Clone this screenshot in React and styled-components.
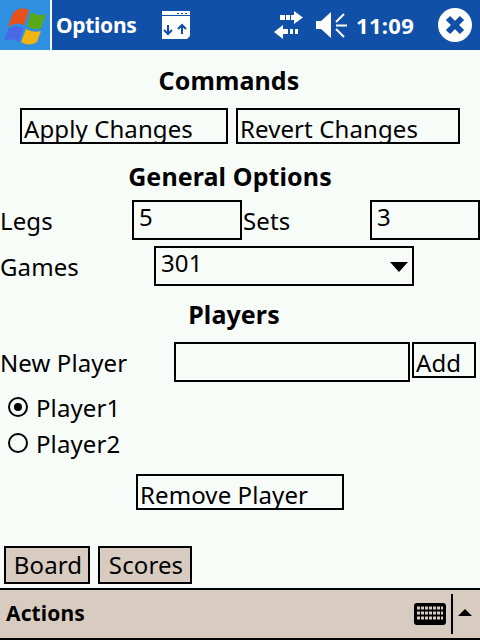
import styled, { createGlobalStyle } from "styled-components";

const GlobalStyle = createGlobalStyle`
    html, body {
        margin: 0;
        padding: 0;
    }
    body {
        font-family: "Noto Sans", "DejaVu Sans", sans-serif;
        background: #f8fcf8;
    }
`;

const Screen = styled.div`
    width: 480px;
    height: 640px;
    display: flex;
    flex-direction: column;
    overflow: hidden;
    color: #000;
    font-family: "Noto Sans", "DejaVu Sans", sans-serif;
    font-size: 24px;
    letter-spacing: 0.1px;
`;

const TitleBar = styled.div`
    height: 50px;
    flex: none;
    display: flex;
    align-items: center;
    background: #1050a8;
    color: #fff;
    font-weight: 700;
`;

const StartButton = styled.div`
    width: 50px;
    height: 50px;
    flex: none;
    background: #2f8fe0;
    border-right: 2px solid #f8fcf8;
`;

const AppTitle = styled.span`
    width: 106px;
    margin-left: 4px;
    font-size: 21px;
    letter-spacing: -0.3px;
`;

const Tray = styled.div`
    display: flex;
    align-items: center;
    margin-left: 84px;
    gap: 13px;
`;

const Clock = styled.span`
    width: 60px;
    margin: 0 9px 0 -4px;
    font-size: 22px;
    letter-spacing: 0.3px;
`;

const Content = styled.div`
    flex: 1;
    display: flex;
    flex-direction: column;
    background: #f8fcf8;
`;

const Heading = styled.h2`
    margin: ${(p) => p.$top}px 0 0 ${(p) => p.$left}px;
    width: ${(p) => p.$width}px;
    height: 30px;
    line-height: 28px;
    font-size: 25px;
    font-weight: 700;
    text-align: center;
    white-space: nowrap;
`;

const Row = styled.div`
    display: flex;
    align-items: flex-start;
    margin-top: ${(p) => p.$top || 0}px;
    padding-left: ${(p) => p.$pad || 0}px;
`;

const Button = styled.div`
    box-sizing: border-box;
    width: ${(p) => p.$width}px;
    height: ${(p) => p.$height || 36}px;
    margin-left: ${(p) => p.$gap || 0}px;
    border: 2px solid #000;
    background: ${(p) => (p.$tab ? "#d8ccc0" : "#f8fcf8")};
    padding: ${(p) => (p.$tab ? 3 : 5)}px 0 0 2px;
    line-height: 28px;
    white-space: nowrap;
    text-align: ${(p) => (p.$tab ? "center" : "left")};
`;

const Field = styled.div`
    box-sizing: border-box;
    width: ${(p) => p.$width}px;
    height: 40px;
    margin-left: ${(p) => p.$gap || 0}px;
    border: 2px solid #000;
    padding-left: 5px;
    line-height: 30px;
    display: flex;
    align-items: flex-start;
    justify-content: space-between;
`;

const Label = styled.span`
    width: ${(p) => p.$width}px;
    height: 40px;
    margin-left: ${(p) => p.$gap || 0}px;
    line-height: 42px;
    white-space: nowrap;
    flex: none;
`;

const Caret = styled.span`
    width: 0;
    height: 0;
    margin: 14px 4px 0 0;
    border-left: 9px solid transparent;
    border-right: 9px solid transparent;
    border-top: 10px solid #000;
`;

const RadioGroup = styled.div`
    margin-top: 7px;
`;

const RadioRow = styled.div`
    display: flex;
    align-items: center;
    height: 36px;
    padding-left: 8px;
    gap: 8px;
`;

const Radio = styled.span`
    box-sizing: border-box;
    width: 20px;
    height: 20px;
    border: 2px solid #000;
    border-radius: 50%;
    display: flex;
    align-items: center;
    justify-content: center;

    &::after {
        content: "";
        width: 8px;
        height: 8px;
        border-radius: 50%;
        background: ${(p) => (p.$checked ? "#000" : "transparent")};
    }
`;

const Footer = styled.div`
    box-sizing: border-box;
    height: 52px;
    flex: none;
    display: flex;
    align-items: center;
    background: #d8ccc0;
    border-top: 2px solid #000;
    border-bottom: 2px solid #000;
    padding-left: 6px;
    font-weight: 700;
`;

const FooterLabel = styled.span`
    width: 408px;
    font-size: 21px;
    line-height: 46px;
    height: 48px;
`;

const FooterDivider = styled.span`
    width: 2px;
    height: 40px;
    background: #000;
    margin: 0 5px 0 5px;
`;

const UpCaret = styled.span`
    width: 0;
    height: 0;
    border-left: 7px solid transparent;
    border-right: 7px solid transparent;
    border-bottom: 7px solid #000;
    margin-bottom: 3px;
`;

const WindowsFlag = () => (
    <svg width="50" height="50" viewBox="0 0 50 50">
        <path d="M13 13 Q20 6 29 10 L24 25 Q16 21 8 27 Z" fill="#e8501c" />
        <path d="M31 12 Q38 17 46 14 L41 28 Q34 31 27 26 Z" fill="#58a818" />
        <path d="M8 29 Q15 24 23 28 L19 42 Q11 37 4 41 Z" fill="#4868e8" />
        <path d="M26 29 Q33 33 41 31 L37 42 Q29 47 21 42 Z" fill="#f0b410" />
    </svg>
);

const BarsIcon = () => (
    <svg width="28" height="28" viewBox="0 0 28 28">
        <path d="M0 0H28V25L25 28H0Z" fill="#fff" />
        <path d="M0 4.500H28M15 2.500H17M19 2.500H21M23 2.500H25" stroke="#1050a8" strokeWidth="1" fill="none" />
        <path d="M6 14V23M2 19L6 23L10 19M20 23V14M16 18L20 14L24 18" stroke="#1050a8" strokeWidth="2" fill="none" />
    </svg>
);

const ArrowsIcon = () => (
    <svg width="29" height="28" viewBox="0 0 29 28">
        <path d="M6 4H11V9H6ZM12 4H16V9H12ZM17 4H20V9H17ZM20 0L29 6.500L20 13Z" fill="#fff" />
        <path d="M21 18H24V23H21ZM16 18H19V23H16ZM9 18H14V23H9ZM9 14L0 21L9 28Z" fill="#fff" />
    </svg>
);

const SpeakerIcon = () => (
    <svg width="31" height="28" viewBox="0 0 31 28">
        <path d="M0 10H5L15 1V27L5 18H0Z" fill="#fff" />
        <path d="M20 11L28 3M20 14.500H31M20 18L28 26" stroke="#fff" strokeWidth="2" fill="none" />
    </svg>
);

const CloseIcon = () => (
    <svg width="34" height="34" viewBox="0 0 34 34">
        <circle cx="17" cy="17" r="17" fill="#fff" />
        <path d="M10 10L24 24M24 10L10 24" stroke="#1050a8" strokeWidth="6" fill="none" />
    </svg>
);

const KeyboardIcon = () => (
    <svg width="32" height="22" viewBox="0 0 32 22">
        <rect x="0" y="0" width="32" height="22" rx="3" fill="#000" />
        <path d="M3 5H29M3 10H29M3 15H29" stroke="#d8ccc0" strokeWidth="3" strokeDasharray="3 1" fill="none" />
    </svg>
);

const App = () => {
    return (
        <Screen>
            <GlobalStyle />
            <TitleBar>
                <StartButton>
                    <WindowsFlag />
                </StartButton>
                <AppTitle>Options</AppTitle>
                <BarsIcon />
                <Tray>
                    <ArrowsIcon />
                    <SpeakerIcon />
                    <Clock>11:09</Clock>
                    <CloseIcon />
                </Tray>
            </TitleBar>
            <Content>
                <Heading $top={16} $left={129} $width={200}>Commands</Heading>
                <Row $top={12} $pad={20}>
                    <Button $width={208}>Apply Changes</Button>
                    <Button $width={224} $gap={8}>Revert Changes</Button>
                </Row>
                <Heading $top={18} $left={80} $width={300}>General Options</Heading>
                <Row $top={8}>
                    <Label $width={132}>Legs</Label>
                    <Field $width={110}>5</Field>
                    <Label $width={127} $gap={1}>Sets</Label>
                    <Field $width={110}>3</Field>
                </Row>
                <Row $top={6}>
                    <Label $width={154}>Games</Label>
                    <Field $width={260}>
                        301
                        <Caret />
                    </Field>
                </Row>
                <Heading $top={14} $left={134} $width={200}>Players</Heading>
                <Row $top={12}>
                    <Label $width={174}>New Player</Label>
                    <Field $width={236} />
                    <Button $width={64} $gap={2}>Add</Button>
                </Row>
                <RadioGroup>
                    <RadioRow>
                        <Radio $checked />
                        Player1
                    </RadioRow>
                    <RadioRow>
                        <Radio />
                        Player2
                    </RadioRow>
                </RadioGroup>
                <Row $top={13} $pad={136}>
                    <Button $width={208}>Remove Player</Button>
                </Row>
                <Row $top={36} $pad={4}>
                    <Button $width={86} $height={38} $tab>Board</Button>
                    <Button $width={94} $height={38} $gap={8} $tab>Scores</Button>
                </Row>
            </Content>
            <Footer>
                <FooterLabel>Actions</FooterLabel>
                <KeyboardIcon />
                <FooterDivider />
                <UpCaret />
            </Footer>
        </Screen>
    );
};

export default App;
